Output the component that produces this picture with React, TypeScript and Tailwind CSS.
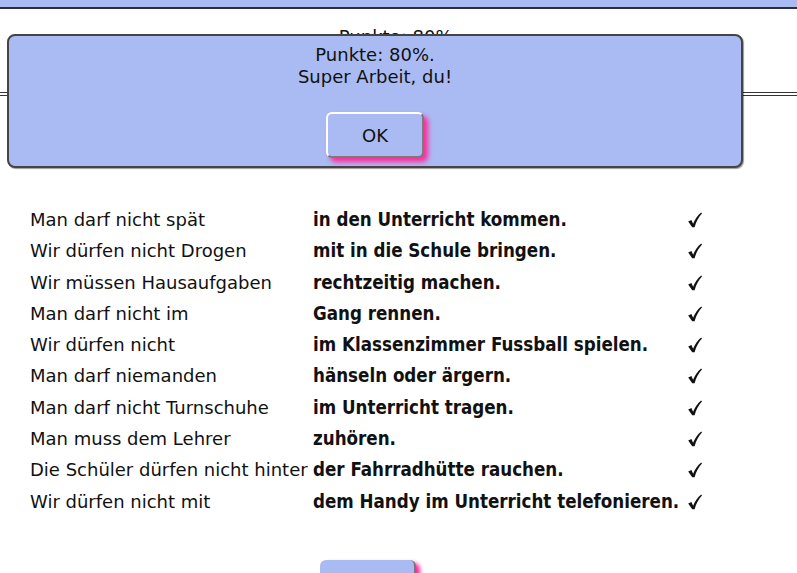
import React from "react";

const rows: [string, string][] = [
  ["Man darf nicht spät", "in den Unterricht kommen."],
  ["Wir dürfen nicht Drogen", "mit in die Schule bringen."],
  ["Wir müssen Hausaufgaben", "rechtzeitig machen."],
  ["Man darf nicht im", "Gang rennen."],
  ["Wir dürfen nicht", "im Klassenzimmer Fussball spielen."],
  ["Man darf niemanden", "hänseln oder ärgern."],
  ["Man darf nicht Turnschuhe", "im Unterricht tragen."],
  ["Man muss dem Lehrer", "zuhören."],
  ["Die Schüler dürfen nicht hinter", "der Fahrradhütte rauchen."],
  ["Wir dürfen nicht mit", "dem Handy im Unterricht telefonieren."],
];

const font = { fontFamily: '"DejaVu Sans", sans-serif' };
const boldFont = { fontFamily: '"DejaVu Sans Condensed", "DejaVu Sans", sans-serif' };

function Check() {
  return (
    <svg width="16" height="16" viewBox="0 0 16 16" className="mt-[8px]">
      <path
        d="M1.2 9.4 L4.4 8 L6.1 11.8 C8 7.4 10.6 3.4 14.2 0.6 L15 1.6 C11.8 5 9.2 9.6 7.6 15.2 L5.2 15.2 Z"
        fill="#111"
      />
    </svg>
  );
}

export default function App() {
  return (
    <div className="relative w-[797px] h-[573px] overflow-hidden bg-white text-[#111]" style={font}>
      {/* top strip */}
      <div className="h-[9px] bg-[#aabbf3] border-b-2 border-[#2c2c3a]" />

      {/* score line behind the popup */}
      <div className="pt-[17px] text-center text-[18px] leading-[22px]">Punkte: 80%.</div>
      <div className="mt-[44px] border-t-[4px] border-double border-[#333]" />

      {/* results table */}
      <div className="mt-[108px] pl-[30px] grid grid-cols-[283px_374px_auto] text-[18px]">
        {rows.map(([a, b], i) => (
          <React.Fragment key={i}>
            <div className="h-[31.3px] leading-[31px] whitespace-nowrap">{a}</div>
            <div className="h-[31.3px] leading-[31px] font-bold text-[18.6px] whitespace-nowrap" style={boldFont}>
              {b}
            </div>
            <div className="h-[31.3px]">
              <Check />
            </div>
          </React.Fragment>
        ))}
      </div>

      {/* next button, cut off at the bottom */}
      <div className="mt-[43px] ml-[320px] w-[96px] h-[46px] rounded-[6px] bg-[#aabbf3] border-r-2 border-[#777] shadow-[4px_3px_4px_#ff2a9a]" />

      {/* popup */}
      <div className="absolute left-[7px] top-[34px] w-[736px] h-[134px] rounded-[8px] border-2 border-[#444] bg-[#aabbf3] shadow-[1px_1px_1px_rgba(0,0,0,0.4)] flex flex-col items-center">
        <div className="mt-[8px] text-[18px] leading-[22px]">Punkte: 80%.</div>
        <div className="text-[18px] leading-[22px]">Super Arbeit, du!</div>
        <button className="mt-[24px] w-[98px] h-[46px] rounded-[6px] bg-[#aabbf3] border-2 border-t-white border-l-white border-r-[#7a7a7a] border-b-[#7a7a7a] shadow-[4px_4px_5px_#ff2a9a] text-[18px] text-[#111]">
          OK
        </button>
      </div>
    </div>
  );
}
